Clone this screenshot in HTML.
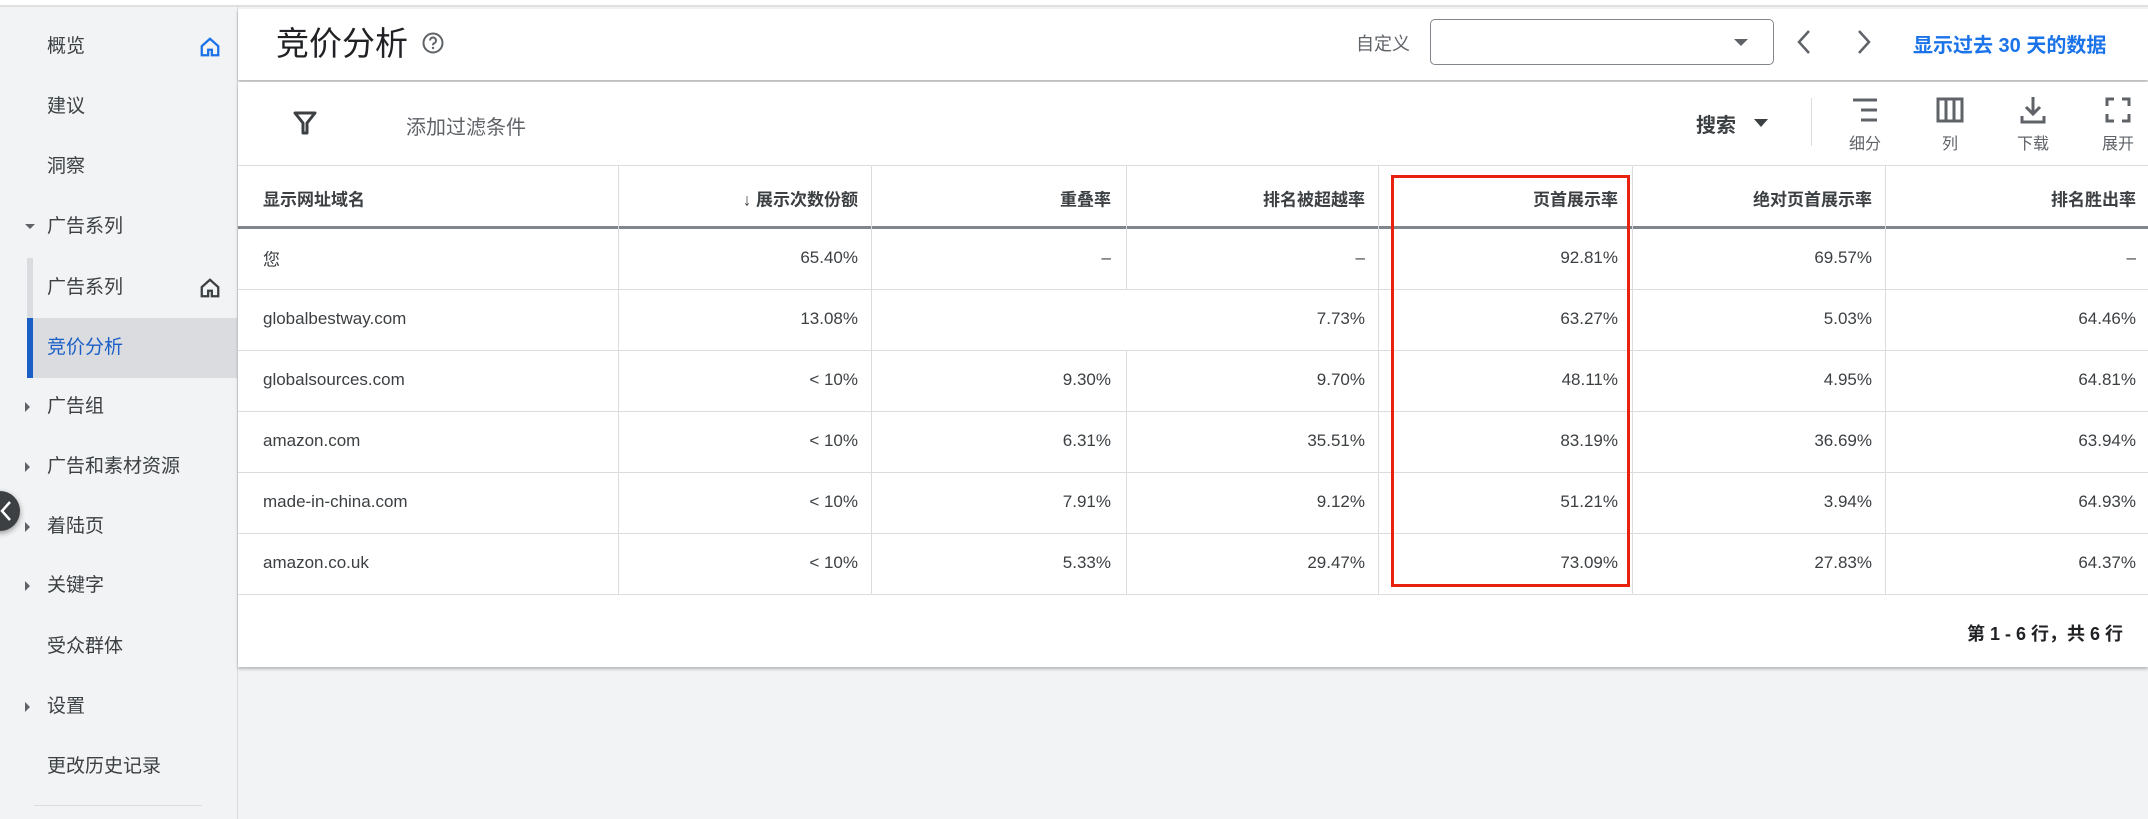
<!DOCTYPE html>
<html><head><meta charset="utf-8"><style>
*{margin:0;padding:0;box-sizing:border-box}
body{width:2148px;height:812px;background:#f1f3f4;font-family:"Liberation Sans","Noto Sans CJK SC",sans-serif;color:#3c4043;position:relative;overflow:hidden}
.a{position:absolute;white-space:nowrap}
.side{left:0;top:0;width:238px;height:812px;background:#f1f3f4;border-right:1px solid #dadce0}
.si{position:absolute;left:47px;font-size:19px;line-height:24px;transform:translateY(-12px);white-space:nowrap}
.tri{position:absolute;left:25px;width:0;height:0;border-top:5px solid transparent;border-bottom:5px solid transparent;border-left:5px solid #5f6368;transform:translateY(-5px)}
.th{position:absolute;font-size:17px;font-weight:bold;color:#3c4043;top:198px;transform:translateY(-50%);white-space:nowrap}
.td{position:absolute;font-size:17px;color:#3c4043;transform:translateY(-50%);white-space:nowrap}
.vl{position:absolute;width:1px;background:#dadce0}
.hl{position:absolute;height:1px;background:#dadce0;left:238px;width:1910px}
.ic{position:absolute;top:110px;transform:translate(-50%,-50%)}
.lb{position:absolute;top:142px;font-size:16px;color:#5f6368;transform:translate(-50%,-50%);white-space:nowrap}
</style></head><body>
<div class="a" style="left:0;top:0;width:2148px;height:7px;background:#fff;border-bottom:2px solid #e0e0e0"></div>
<div class="a side" style="top:7px"></div>
<div class="si" style="top:47px">概览</div>
<svg class="a" style="left:199px;top:36px" width="22" height="22" viewBox="0 0 24 24"><path d="M12 3L3 11v10h7v-6h4v6h7V11z" fill="none" stroke="#1a73e8" stroke-width="2.5"/></svg>
<div class="si" style="top:107px">建议</div>
<div class="si" style="top:167px">洞察</div>
<div class="a" style="left:25px;top:224px;border-left:5px solid transparent;border-right:5px solid transparent;border-top:5px solid #5f6368"></div>
<div class="si" style="top:227px">广告系列</div>
<div class="a" style="left:27px;top:258px;width:6px;height:60px;background:#dadce0"></div>
<div class="si" style="top:288px">广告系列</div>
<svg class="a" style="left:199px;top:277px" width="22" height="22" viewBox="0 0 24 24"><path d="M12 3L3 11v10h7v-6h4v6h7V11z" fill="none" stroke="#3c4043" stroke-width="2.5"/></svg>
<div class="a" style="left:27px;top:318px;width:211px;height:60px;background:#dadce0"></div>
<div class="a" style="left:27px;top:318px;width:6px;height:60px;background:#1a5fc7"></div>
<div class="si" style="top:348px;color:#1a5fc7">竞价分析</div>
<div class="tri" style="top:407px"></div><div class="si" style="top:407px">广告组</div>
<div class="tri" style="top:467px"></div><div class="si" style="top:467px">广告和素材资源</div>
<div class="tri" style="top:527px"></div><div class="si" style="top:527px">着陆页</div>
<div class="tri" style="top:586px"></div><div class="si" style="top:586px">关键字</div>
<div class="si" style="top:647px">受众群体</div>
<div class="tri" style="top:707px"></div><div class="si" style="top:707px">设置</div>
<div class="si" style="top:767px">更改历史记录</div>
<div class="a" style="left:34px;top:805px;width:168px;height:1px;background:#dadce0"></div>
<div class="a" style="left:-20px;top:491px;width:40px;height:40px;border-radius:50%;background:#3c4043;box-shadow:0 2px 6px rgba(0,0,0,.4)"></div>
<svg class="a" style="left:0;top:499px" width="14" height="24" viewBox="0 0 14 24"><path d="M10 3L2 12l8 9" fill="none" stroke="#fff" stroke-width="2.5"/></svg>

<div class="a" style="left:238px;top:9px;width:1910px;height:71px;background:#fff;box-shadow:0 2px 3px rgba(0,0,0,.25)"></div>
<div class="a" style="left:276px;top:24px;font-size:33px;line-height:40px;color:#202124">竞价分析</div>
<svg class="a" style="left:421px;top:31px" width="24" height="24" viewBox="0 0 24 24"><circle cx="12" cy="12" r="9.5" fill="none" stroke="#5f6368" stroke-width="2"/><path d="M9 9.5a3 3 0 1 1 4 2.8c-.8.4-1 1-1 2" fill="none" stroke="#5f6368" stroke-width="2"/><circle cx="12" cy="17" r="1.2" fill="#5f6368"/></svg>
<div class="a" style="left:1356px;top:30px;font-size:18px;color:#5f6368">自定义</div>
<div class="a" style="left:1430px;top:19px;width:344px;height:46px;border:1px solid #80868b;border-radius:5px;background:#fff"></div>
<div class="a" style="left:1734px;top:39px;border-left:7px solid transparent;border-right:7px solid transparent;border-top:7px solid #5f6368"></div>
<svg class="a" style="left:1794px;top:28px" width="20" height="28" viewBox="0 0 20 28"><path d="M15 3L5 14l10 11" fill="none" stroke="#5f6368" stroke-width="2.5"/></svg>
<svg class="a" style="left:1854px;top:28px" width="20" height="28" viewBox="0 0 20 28"><path d="M5 3l10 11L5 25" fill="none" stroke="#5f6368" stroke-width="2.5"/></svg>
<div class="a" style="left:1913px;top:29px;font-size:20px;font-weight:bold;color:#1a73e8">显示过去 30 天的数据</div>

<div class="a" style="left:238px;top:82px;width:1910px;height:585px;background:#fff;box-shadow:0 2px 3px rgba(0,0,0,.25)"></div>
<svg class="a" style="left:292px;top:110px" width="26" height="26" viewBox="0 0 26 26"><path d="M3 3h20l-8 10v10h-4V13z" fill="none" stroke="#3c4043" stroke-width="3" stroke-linejoin="round"/></svg>
<div class="a" style="left:406px;top:111px;font-size:20px;color:#5f6368">添加过滤条件</div>
<div class="a" style="left:1696px;top:109px;font-size:20px;font-weight:bold;color:#3c4043">搜索</div>
<div class="a" style="left:1754px;top:119px;border-left:7px solid transparent;border-right:7px solid transparent;border-top:8px solid #3c4043"></div>
<div class="a" style="left:1811px;top:98px;width:1px;height:48px;background:#dadce0"></div>
<svg class="ic" style="left:1865px" width="28" height="26" viewBox="0 0 28 26"><path d="M2 3h24M10 13h16M10 23h16" stroke="#5f6368" stroke-width="3"/></svg>
<div class="lb" style="left:1865px">细分</div>
<svg class="ic" style="left:1950px" width="28" height="26" viewBox="0 0 28 26"><rect x="2" y="2" width="24" height="22" fill="none" stroke="#5f6368" stroke-width="3"/><path d="M10 2v22M18 2v22" stroke="#5f6368" stroke-width="3"/></svg>
<div class="lb" style="left:1950px">列</div>
<svg class="ic" style="left:2033px" width="26" height="28" viewBox="0 0 26 28"><path d="M13 1v17M6 11l7 7 7-7M2 20v6h22v-6" fill="none" stroke="#5f6368" stroke-width="3"/></svg>
<div class="lb" style="left:2033px">下载</div>
<svg class="ic" style="left:2118px" width="26" height="26" viewBox="0 0 26 26"><path d="M2 9V2h7M17 2h7v7M24 17v7h-7M9 24H2v-7" fill="none" stroke="#5f6368" stroke-width="3"/></svg>
<div class="lb" style="left:2118px">展开</div>

<div class="hl" style="top:165px"></div>
<div class="a" style="left:238px;top:226px;width:1910px;height:3px;background:#80868b"></div>
<div class="hl" style="top:289px"></div>
<div class="hl" style="top:350px"></div>
<div class="hl" style="top:411px"></div>
<div class="hl" style="top:472px"></div>
<div class="hl" style="top:533px"></div>
<div class="hl" style="top:594px"></div>
<div class="vl" style="left:618px;top:166px;height:428px"></div>
<div class="vl" style="left:871px;top:166px;height:428px"></div>
<div class="vl" style="left:1126px;top:166px;height:123px"></div>
<div class="vl" style="left:1126px;top:350px;height:244px"></div>
<div class="vl" style="left:1378px;top:166px;height:428px"></div>
<div class="vl" style="left:1632px;top:166px;height:428px"></div>
<div class="vl" style="left:1885px;top:166px;height:428px"></div>

<div class="th" style="left:263px">显示网址域名</div>
<div class="th" style="right:1290px">↓ 展示次数份额</div>
<div class="th" style="right:1037px">重叠率</div>
<div class="th" style="right:783px">排名被超越率</div>
<div class="th" style="right:530px">页首展示率</div>
<div class="th" style="right:276px">绝对页首展示率</div>
<div class="th" style="right:12px">排名胜出率</div>

<div class="td" style="left:263px;top:258px">您</div>
<div class="td" style="right:1290px;top:258px">65.40%</div>
<div class="td" style="right:1037px;top:258px">–</div>
<div class="td" style="right:783px;top:258px">–</div>
<div class="td" style="right:530px;top:258px">92.81%</div>
<div class="td" style="right:276px;top:258px">69.57%</div>
<div class="td" style="right:12px;top:258px">–</div>

<div class="td" style="left:263px;top:319px">globalbestway.com</div>
<div class="td" style="right:1290px;top:319px">13.08%</div>
<div class="td" style="right:783px;top:319px">7.73%</div>
<div class="td" style="right:530px;top:319px">63.27%</div>
<div class="td" style="right:276px;top:319px">5.03%</div>
<div class="td" style="right:12px;top:319px">64.46%</div>

<div class="td" style="left:263px;top:380px">globalsources.com</div>
<div class="td" style="right:1290px;top:380px">&lt; 10%</div>
<div class="td" style="right:1037px;top:380px">9.30%</div>
<div class="td" style="right:783px;top:380px">9.70%</div>
<div class="td" style="right:530px;top:380px">48.11%</div>
<div class="td" style="right:276px;top:380px">4.95%</div>
<div class="td" style="right:12px;top:380px">64.81%</div>

<div class="td" style="left:263px;top:441px">amazon.com</div>
<div class="td" style="right:1290px;top:441px">&lt; 10%</div>
<div class="td" style="right:1037px;top:441px">6.31%</div>
<div class="td" style="right:783px;top:441px">35.51%</div>
<div class="td" style="right:530px;top:441px">83.19%</div>
<div class="td" style="right:276px;top:441px">36.69%</div>
<div class="td" style="right:12px;top:441px">63.94%</div>

<div class="td" style="left:263px;top:502px">made-in-china.com</div>
<div class="td" style="right:1290px;top:502px">&lt; 10%</div>
<div class="td" style="right:1037px;top:502px">7.91%</div>
<div class="td" style="right:783px;top:502px">9.12%</div>
<div class="td" style="right:530px;top:502px">51.21%</div>
<div class="td" style="right:276px;top:502px">3.94%</div>
<div class="td" style="right:12px;top:502px">64.93%</div>

<div class="td" style="left:263px;top:563px">amazon.co.uk</div>
<div class="td" style="right:1290px;top:563px">&lt; 10%</div>
<div class="td" style="right:1037px;top:563px">5.33%</div>
<div class="td" style="right:783px;top:563px">29.47%</div>
<div class="td" style="right:530px;top:563px">73.09%</div>
<div class="td" style="right:276px;top:563px">27.83%</div>
<div class="td" style="right:12px;top:563px">64.37%</div>

<div class="a" style="left:1391px;top:175px;width:239px;height:412px;border:3px solid #e8220f"></div>
<div class="a" style="right:25px;top:620px;font-size:18px;font-weight:bold;color:#202124">第 1 - 6 行，共 6 行</div>
</body></html>
